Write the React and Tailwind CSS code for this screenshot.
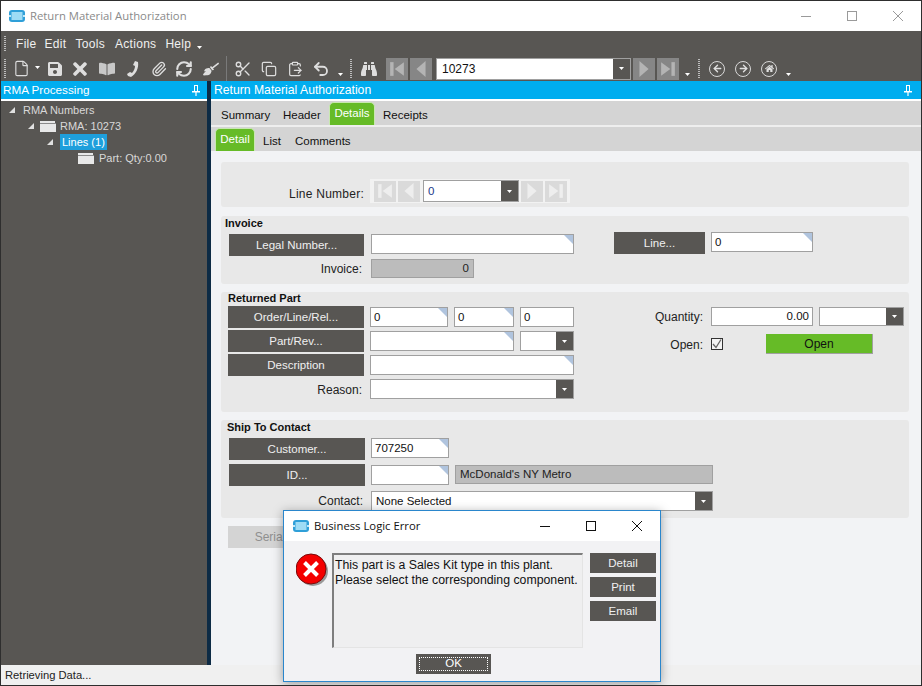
import { FaBinoculars, FaBookOpen, FaBroom, FaSave, FaTimes, FaHome } from "react-icons/fa";
import { ArrowLeft, ArrowRight, Copy, ClipboardPaste, Paperclip, RefreshCw, Scissors, Undo2, File } from "lucide-react";

const Logo = () => (
  <svg width="16" height="12" viewBox="0 0 16 12">
    <rect x="0" y="0" width="16" height="12" rx="3" fill="#2f9fd8" />
    <rect x="2.5" y="2" width="11" height="8" fill="#9fdcf5" />
    <rect x="0" y="5" width="2" height="2" fill="#bfe8f8" />
    <rect x="14" y="5" width="2" height="2" fill="#bfe8f8" />
  </svg>
);

const Folder = () => (
  <svg width="16" height="11" viewBox="0 0 16 11" className="shrink-0">
    <path d="M0 0h15v2H0z M0 3h16v8H0z" fill="#e8e8e8" />
    <path d="M0 2h16v1H0z" fill="#8a8a8a" />
  </svg>
);

const Triangle = () => (
  <svg width="6" height="6" viewBox="0 0 6 6" className="shrink-0">
    <path d="M6 0v6H0z" fill="#e0e0e0" />
  </svg>
);

const Caret = ({ className = "" }) => (
  <svg width="5" height="3" viewBox="0 0 5 3" className={className}>
    <path d="M0 0h5L2.5 3z" fill="#fff" />
  </svg>
);

const Pin = ({ className = "" }) => (
  <svg width="8" height="11" viewBox="0 0 8 11" className={className}>
    <path d="M2 0h4v6H5V1H3v5H2z M5 1h1v5H5z" fill="#fff" />
    <path d="M0 6h8v1.5H0z M3.4 7h1.2v4H3.4z" fill="#fff" />
  </svg>
);

const Grip = ({ className = "" }) => (
  <div className={`w-[2px] bg-[repeating-linear-gradient(to_bottom,#bdbdbd_0,#bdbdbd_1px,transparent_1px,transparent_2px)] ${className}`} />
);

const NavArrow = ({ dir, bar, fill = "#b4b4b4" }) => (
  <svg width="16" height="16" viewBox="0 0 14 14">
    {dir === "left" ? (
      <>
        {bar && <rect x="1" y="1" width="3" height="12" fill={fill} />}
        <path d={bar ? "M13 1v12L5 7z" : "M11 0v14L3 7z"} fill={fill} />
      </>
    ) : (
      <>
        <path d={bar ? "M1 1v12l8-6z" : "M3 0v14l8-7z"} fill={fill} />
        {bar && <rect x="10" y="1" width="3" height="12" fill={fill} />}
      </>
    )}
  </svg>
);

const NavButton = ({ dir, bar, className = "", fill }) => (
  <div className={`flex items-center justify-center ${className}`}>
    <NavArrow dir={dir} bar={bar} fill={fill} />
  </div>
);

const CircleIcon = ({ children }) => (
  <div className="w-[16px] h-[16px] rounded-full border-[1.5px] border-[#d8d8d8] flex items-center justify-center text-[#e0e0e0]">
    {children}
  </div>
);

const DarkButton = ({ children, className = "" }) => (
  <div className={`bg-[#585653] text-[#f0f0f0] flex items-center justify-center text-[11.5px] pt-[1px] shrink-0 ${className}`}>
    {children}
  </div>
);

const Input = ({ value, width, corner = true, right = false, className = "h-[20px]" }) => (
  <div className={`relative bg-white border border-[#a0a0a0] text-[11.5px] text-[#111] flex items-center px-[3px] pt-[1px] shrink-0 ${right ? "justify-end" : ""} ${width} ${className}`}>
    {value}
    {corner && (
      <svg width="9" height="9" viewBox="0 0 9 9" className="absolute top-0 right-0">
        <path d="M0 0h9v9z" fill="#b0c4de" />
      </svg>
    )}
  </div>
);

const ReadOnly = ({ value, width, right = false }) => (
  <div className={`bg-[#bcbcbc] border border-[#a0a0a0] h-[19px] text-[11.5px] text-[#222] flex items-center px-[4px] pt-[1px] shrink-0 ${right ? "justify-end" : ""} ${width}`}>
    {value}
  </div>
);

const Combo = ({ value, width, className = "h-[20px]", text = "" }) => (
  <div className={`bg-white border border-[#a0a0a0] text-[11.5px] text-[#111] flex items-center justify-between shrink-0 ${width} ${className}`}>
    <span className={`pl-[4px] pt-[1px] ${text}`}>{value}</span>
    <div className="w-[17px] h-full bg-[#585653] flex items-center justify-center">
      <Caret />
    </div>
  </div>
);

const Label = ({ children, className = "" }) => (
  <div className={`text-[12px] text-[#222] text-right shrink-0 ${className}`}>{children}</div>
);

const Group = ({ children, className = "" }) => (
  <div className={`bg-[#e8e8e8] rounded-[3px] w-[688px] ${className}`}>{children}</div>
);

const Tab = ({ children, active, className = "" }) => (
  <div
    className={
      active
        ? `bg-[#66bb27] text-white border border-b-0 border-[#c8e8b0] rounded-t-[5px] flex items-center justify-center text-[11.5px] pb-[1px] ${className}`
        : `text-[#111] flex items-center text-[11.5px] pt-[5px] ${className}`
    }
  >
    {children}
  </div>
);

const ToolBar = () => (
  <div className="h-[25px] flex items-center text-[#dedede] relative">
    <Grip className="h-[20px] ml-[3px]" />
    <File size={17} strokeWidth={1.6} className="ml-[7px]" />
    <Caret className="ml-[5px] -mt-[3px]" />
    <FaSave size={16} className="ml-[7px]" />
    <FaTimes size={20} className="ml-[7px]" />
    <FaBookOpen size={16} className="ml-[9px] text-[#c8c8c8]" />
    <svg width="12" height="16" viewBox="0 0 12 16" className="ml-[12px]">
      <path d="M8 0l3 1c1 6-2 12-7 15l-3-1-1-2 3-2 2 1c2-2 3-5 3-7L6 4z" fill="currentColor" />
    </svg>
    <Paperclip size={16} strokeWidth={2} className="ml-[12px]" />
    <RefreshCw size={18} strokeWidth={2.8} className="ml-[8px]" />
    <FaBroom size={16} className="ml-[10px]" />
    <div className="w-[1px] h-[25px] bg-[#7a7a7a] ml-[7px]" />
    <Scissors size={18} strokeWidth={1.8} className="ml-[7px]" />
    <Copy size={16} strokeWidth={1.8} className="ml-[9px]" />
    <ClipboardPaste size={16} strokeWidth={1.8} className="ml-[10px]" />
    <Undo2 size={18} strokeWidth={2.4} className="ml-[9px]" />
    <Caret className="ml-[8px] mt-[12px]" />
    <Grip className="h-[20px] ml-[7px]" />
    <FaBinoculars size={16} className="ml-[9px]" />
    <NavButton dir="left" bar className="w-[22px] h-[22px] ml-[9px] bg-[#868686]" />
    <NavButton dir="left" className="w-[22px] h-[22px] ml-[2px] bg-[#868686]" />
    <div className="w-[195px] h-[22px] ml-[4px] bg-white border border-[#a0a0a0] flex items-center justify-between">
      <span className="pl-[5px] text-[12px] text-[#111]">10273</span>
      <div className="w-[17px] h-full bg-[#585653] flex items-center justify-center">
        <Caret />
      </div>
    </div>
    <NavButton dir="right" className="w-[22px] h-[22px] ml-[2px] bg-[#868686]" />
    <NavButton dir="right" bar className="w-[22px] h-[22px] ml-[2px] bg-[#868686]" />
    <Caret className="ml-[6px] mt-[12px]" />
    <Grip className="h-[20px] ml-[8px]" />
    <div className="ml-[9px]">
      <CircleIcon><ArrowLeft size={11} strokeWidth={3} /></CircleIcon>
    </div>
    <div className="ml-[10px]">
      <CircleIcon><ArrowRight size={11} strokeWidth={3} /></CircleIcon>
    </div>
    <div className="ml-[10px]">
      <CircleIcon><FaHome size={9} /></CircleIcon>
    </div>
    <Caret className="ml-[9px] mt-[12px]" />
  </div>
);

const Tree = () => (
  <div className="text-[11px] text-[#d8d8d8] pt-[1px]">
    <div className="h-[16px] flex items-center pl-[8px] gap-[8px]">
      <Triangle />
      <span>RMA Numbers</span>
    </div>
    <div className="h-[16px] flex items-center pl-[27px] gap-[6px]">
      <Triangle />
      <div className="flex items-center gap-[4px]">
        <Folder />
        <span>RMA: 10273</span>
      </div>
    </div>
    <div className="h-[16px] flex items-center pl-[46px] gap-[7px]">
      <Triangle />
      <span className="bg-[#1e9fdc] text-white h-[16px] px-[2px] flex items-center">Lines (1)</span>
    </div>
    <div className="h-[16px] flex items-center pl-[77px] gap-[5px]">
      <Folder />
      <span>Part: Qty:0.00</span>
    </div>
  </div>
);

const Dialog = () => (
  <div className="absolute left-[282px] top-[509px] w-[378px] h-[172px] border border-[#2a86cc] bg-[#f2f2f4] shadow-[0_2px_10px_rgba(0,0,0,0.35)] flex flex-col">
    <div className="h-[30px] bg-white flex items-center shrink-0">
      <div className="ml-[9px]"><Logo /></div>
      <span className="ml-[5px] text-[11.3px] text-[#111] font-['Open_Sans',sans-serif]">Business Logic Error</span>
      <svg width="12" height="12" viewBox="0 0 12 12" className="ml-auto">
        <path d="M1 6.5h10" stroke="#111" />
      </svg>
      <svg width="12" height="12" viewBox="0 0 12 12" className="ml-[34px]">
        <rect x="1.5" y="1.5" width="9" height="9" fill="none" stroke="#111" />
      </svg>
      <svg width="12" height="12" viewBox="0 0 12 12" className="ml-[34px] mr-[17px]">
        <path d="M1 1l10 10M11 1L1 11" stroke="#111" />
      </svg>
    </div>
    <div className="flex pt-[12px]">
      <svg width="32" height="33" viewBox="0 0 32 33" className="ml-[12px] shrink-0">
        <circle cx="17" cy="18" r="15" fill="#9a9a9a" />
        <circle cx="15" cy="16" r="15" fill="#f40000" stroke="#7a0a0a" strokeWidth="1" />
        <path d="M8.5 9.5l13 13M21.5 9.5l-13 13" stroke="#fff" strokeWidth="4" />
      </svg>
      <div className="ml-[4px] w-[251px] h-[95px] bg-[#efeff0] border-t-2 border-l-2 border-r border-b border-t-[#7e7e7e] border-l-[#7e7e7e] border-r-[#e4e4e4] border-b-[#e4e4e4] pl-[1px] pt-[3px] text-[12.3px] leading-[15px] text-[#111]">
        This part is a Sales Kit type in this plant.
        <br />
        Please select the corresponding component.
      </div>
      <div className="ml-[7px] flex flex-col gap-[4px]">
        <DarkButton className="w-[66px] h-[20px]">Detail</DarkButton>
        <DarkButton className="w-[66px] h-[20px]">Print</DarkButton>
        <DarkButton className="w-[66px] h-[20px]">Email</DarkButton>
      </div>
    </div>
    <div className="pt-[6px] pl-[132px]">
      <div className="w-[75px] h-[20px] bg-[#585653] p-[3px]">
        <div className="h-full border border-dotted border-white text-white text-[11.5px] flex items-center justify-center">OK</div>
      </div>
    </div>
  </div>
);

export default function App() {
  return (
    <div className="relative w-[922px] h-[686px] overflow-hidden bg-[#585653] border border-[#2e2e2e] flex flex-col font-['Liberation_Sans',Arial,sans-serif]">
      <div className="h-[30px] bg-white flex items-center shrink-0">
        <div className="ml-[8px]"><Logo /></div>
        <span className="ml-[5px] text-[11.3px] text-[#8a8a8a] font-['Open_Sans',sans-serif]">Return Material Authorization</span>
        <svg width="12" height="12" viewBox="0 0 12 12" className="ml-auto">
          <path d="M1 6.5h10" stroke="#9a9a9a" />
        </svg>
        <svg width="12" height="12" viewBox="0 0 12 12" className="ml-[34px]">
          <rect x="1.5" y="1.5" width="9" height="9" fill="none" stroke="#9a9a9a" />
        </svg>
        <svg width="12" height="12" viewBox="0 0 12 12" className="ml-[34px] mr-[17px]">
          <path d="M1 1l10 10M11 1L1 11" stroke="#9a9a9a" />
        </svg>
      </div>

      <div className="h-[25px] flex items-center text-[12px] tracking-[0.3px] text-[#f0f0f0] shrink-0">
        <Grip className="h-[15px] ml-[3px]" />
        <span className="ml-[10px]">File</span>
        <span className="ml-[8px]">Edit</span>
        <span className="ml-[9px]">Tools</span>
        <span className="ml-[10px]">Actions</span>
        <span className="ml-[9px]">Help</span>
        <Caret className="ml-[6px] mt-[8px]" />
      </div>
      <ToolBar />

      <div className="flex-1 flex min-h-0">
        <div className="w-[206px] flex flex-col shrink-0">
          <div className="h-[18px] bg-[#00adef] text-white text-[11.7px] flex items-center justify-between px-[2px] shrink-0">
            <span>RMA Processing</span>
            <Pin className="mr-[5px]" />
          </div>
          <div className="h-[2px] bg-white shrink-0" />
          <Tree />
        </div>
        <div className="w-[4px] bg-[#0d2b45] shrink-0" />

        <div className="flex-1 flex flex-col min-w-0">
          <div className="h-[18px] bg-[#00adef] text-white text-[12.2px] flex items-center justify-between pl-[3px] shrink-0">
            <span>Return Material Authorization</span>
            <Pin className="mr-[9px]" />
          </div>
          <div className="h-[2px] bg-white shrink-0" />
          <div className="h-[24px] bg-[#d4d4d4] flex items-end pl-[10px] shrink-0">
            <Tab className="h-[24px] w-[47px] mr-[15px]">Summary</Tab>
            <Tab className="h-[24px] w-[37px] mr-[9px]">Header</Tab>
            <Tab active className="h-[23px] w-[46px] mr-[8px]">Details</Tab>
            <Tab className="h-[24px] w-[46px]">Receipts</Tab>
          </div>
          <div className="h-[2px] bg-[#eeeeee] shrink-0" />
          <div className="h-[24px] bg-[#d4d4d4] flex items-end pl-[4px] shrink-0">
            <Tab active className="h-[23px] w-[40px] mr-[8px]">Detail</Tab>
            <Tab className="h-[24px] w-[18px] mr-[14px]">List</Tab>
            <Tab className="h-[24px] w-[56px]">Comments</Tab>
          </div>

          <div className="flex-1 bg-[#f2f3f5] pl-[10px] pt-[11px] flex flex-col">
            <Group className="h-[45px] flex items-start">
              <Label className="w-[143px] mt-[23px] tracking-[0.25px]">Line Number:</Label>
              <div className="ml-[6px] mt-[17px] w-[200px] h-[24px] bg-[#f2f2f2] flex items-center pl-[4px]">
                <NavButton dir="left" bar className="w-[22px] h-[21px] bg-[#dadada]" fill="#eeeeee" />
                <NavButton dir="left" className="w-[22px] h-[21px] ml-[2px] bg-[#dadada]" fill="#eeeeee" />
                <Combo value="0" width="w-[96px]" className="h-[22px] ml-[3px]" text="text-[#1a3a8a]" />
                <NavButton dir="right" className="w-[22px] h-[21px] ml-[2px] bg-[#dadada]" fill="#eeeeee" />
                <NavButton dir="right" bar className="w-[22px] h-[21px] ml-[2px] bg-[#dadada]" fill="#eeeeee" />
              </div>
            </Group>

            <Group className="h-[68px] mt-[9px]">
              <div className="h-[14px] pl-[4px] font-bold text-[11px] text-[#111] flex items-center">Invoice</div>
              <div className="flex pl-[8px] pt-[2px]">
                <div className="w-[345px] pt-[2px]">
                  <div className="flex gap-[7px]">
                    <DarkButton className="w-[135px] h-[22px]">Legal Number...</DarkButton>
                    <Input width="w-[203px]" />
                  </div>
                  <div className="flex items-center gap-[7px] mt-[2px]">
                    <Label className="w-[135px] pr-[2px] pt-[2px]">Invoice:</Label>
                    <ReadOnly value="0" width="w-[103px]" right />
                  </div>
                </div>
                <div className="flex gap-[6px] ml-[40px]">
                  <DarkButton className="w-[91px] h-[22px]">Line...</DarkButton>
                  <Input value="0" width="w-[102px]" />
                </div>
              </div>
            </Group>

            <Group className="h-[120px] mt-[8px]">
              <div className="h-[12px] pl-[7px] font-bold text-[11px] text-[#111] flex items-center">Returned Part</div>
              <div className="flex pl-[7px] pt-[2px]">
                <div className="w-[346px] flex flex-col gap-[2px]">
                  <div className="flex items-center gap-[6px]">
                    <DarkButton className="w-[136px] h-[22px]">Order/Line/Rel...</DarkButton>
                    <Input value="0" width="w-[78px]" />
                    <Input value="0" width="w-[60px]" />
                    <Input value="0" width="w-[54px]" corner={false} />
                  </div>
                  <div className="flex items-center gap-[6px]">
                    <DarkButton className="w-[136px] h-[22px]">Part/Rev...</DarkButton>
                    <Input width="w-[144px]" />
                    <Combo width="w-[54px]" />
                  </div>
                  <div className="flex items-center gap-[6px]">
                    <DarkButton className="w-[136px] h-[22px]">Description</DarkButton>
                    <Input width="w-[204px]" />
                  </div>
                  <div className="flex items-center gap-[6px] mt-[1px]">
                    <Label className="w-[134px] mr-[2px] pt-[2px]">Reason:</Label>
                    <Combo width="w-[204px]" />
                  </div>
                </div>
                <div className="ml-[39px] w-[281px]">
                  <div className="flex items-center">
                    <Label className="w-[90px] pt-[2px]">Quantity:</Label>
                    <Input value="0.00" width="w-[102px] ml-[8px]" corner={false} right className="h-[19px]" />
                    <Combo width="w-[85px] ml-[6px]" className="h-[19px]" />
                  </div>
                  <div className="flex items-center mt-[8px]">
                    <Label className="w-[90px] pt-[2px]">Open:</Label>
                    <div className="w-[12px] h-[12px] ml-[8px] border border-[#333] bg-[#f4f4f4] flex items-center justify-center">
                      <svg width="10" height="10" viewBox="0 0 10 10">
                        <path d="M1 5l3 3.5L9 0.5" fill="none" stroke="#666" strokeWidth="1.3" />
                      </svg>
                    </div>
                    <div className="ml-[43px] w-[107px] h-[20px] bg-[#66bb27] border-r border-b border-[#a0a0a0] flex items-center justify-center text-[12px] text-[#111]">
                      Open
                    </div>
                  </div>
                </div>
              </div>
            </Group>

            <Group className="h-[98px] mt-[8px]">
              <div className="h-[18px] pl-[6px] pb-[3px] font-bold text-[11px] text-[#111] flex items-center">Ship To Contact</div>
              <div className="pl-[8px] flex flex-col gap-[4px]">
                <div className="flex gap-[6px]">
                  <DarkButton className="w-[136px] h-[22px]">Customer...</DarkButton>
                  <Input value="707250" width="w-[78px]" />
                </div>
                <div className="flex gap-[6px]">
                  <DarkButton className="w-[136px] h-[22px]">ID...</DarkButton>
                  <Input width="w-[78px] mt-[1px]" />
                  <div className="mt-[1px]">
                    <ReadOnly value="McDonald's NY Metro" width="w-[258px]" />
                  </div>
                </div>
                <div className="flex items-center gap-[6px] mt-[1px]">
                  <Label className="w-[134px] mr-[2px]">Contact:</Label>
                  <Combo value="None Selected" width="w-[342px]" />
                </div>
              </div>
            </Group>

            <div className="mt-[8px] ml-[7px] w-[136px] h-[22px] bg-[#d4d4d4] text-[#8f8f8f] text-[12px] flex items-center justify-center">
              Serial Numbers
            </div>
          </div>
        </div>
      </div>

      <div className="h-[20px] bg-[#f0f0f0] text-[11.2px] text-[#222] flex items-center pl-[4px] pt-[1px] shrink-0">Retrieving Data...</div>
      <Dialog />
    </div>
  );
}
